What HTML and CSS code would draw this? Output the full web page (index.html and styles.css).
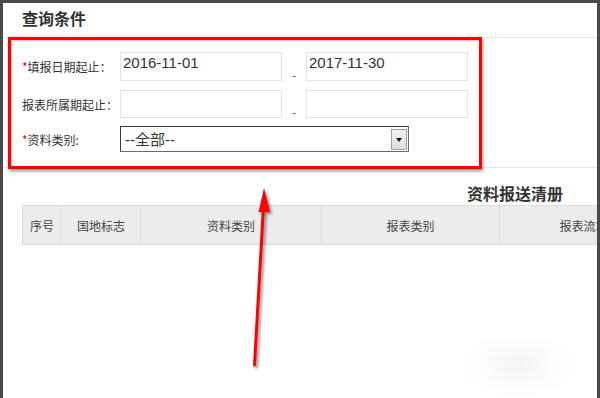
FILE: index.html
```html
<!DOCTYPE html>
<html lang="zh-CN">
<head>
    <meta charset="UTF-8">
    <meta name="viewport" content="width=device-width, initial-scale=1.0">
    <title>查询条件</title>
    <link rel="stylesheet" href="styles.css">
</head>
<body>
    <div class="frame">
        <div class="head">
            <h2>查询条件</h2>
        </div>

        <form class="query">
            <label class="label"><span class="star">*</span>填报日期起止：</label>
            <input class="field" type="text" value="2016-11-01">
            <span class="dash">-</span>
            <input class="field" type="text" value="2017-11-30">

            <label class="label">报表所属期起止：</label>
            <input class="field" type="text" value="">
            <span class="dash">-</span>
            <input class="field" type="text" value="">

            <label class="label"><span class="star">*</span>资料类别:</label>
            <div class="select-box">
                <select class="select">
                    <option>--全部--</option>
                </select>
                <span class="drop"></span>
            </div>
        </form>

        <div class="list">
            <h3 class="list-title">资料报送清册</h3>
            <table class="grid">
                <colgroup>
                    <col style="width: 39px">
                    <col style="width: 79px">
                    <col style="width: 181px">
                    <col style="width: 178px">
                    <col style="width: 180px">
                </colgroup>
                <tr>
                    <th>序号</th>
                    <th>国地标志</th>
                    <th>资料类别</th>
                    <th>报表类别</th>
                    <th>报表流水号</th>
                </tr>
            </table>
        </div>

        <!-- annotation drawn over the screenshot -->
        <div class="mark-box"></div>
        <svg class="mark-arrow" width="600" height="398" viewBox="0 0 600 398">
            <line x1="254.5" y1="365" x2="263.5" y2="206" stroke="#f00" stroke-width="3" stroke-linecap="round"/>
            <polygon points="264,188 258.5,212 270,212" fill="#f00"/>
        </svg>
    </div>
</body>
</html>
```

FILE: styles.css
```css
body {
    margin: 0;
    font-family: "Noto Sans CJK SC", "Liberation Sans", sans-serif;
    color: #333;
}

.frame {
    position: relative;
    width: 600px;
    height: 398px;
    box-sizing: border-box;
    border-top: 3px solid #4a4a4a;
    border-left: 3px solid #4a4a4a;
    border-right: 3px solid #4a4a4a;
    background: radial-gradient(ellipse 62px 34px at 515px 362px, #f5f5f5, #fcfcfc 60%, #fff 100%);
    overflow: hidden;
}

.head {
    height: 34px;
    padding-left: 19px;
    border-bottom: 1px solid #e8e8e8;
}

h2 {
    margin: 0;
    font-size: 16px;
    line-height: 30px;
    font-weight: bold;
    color: #333;
}

.query {
    display: grid;
    grid-template-columns: 98px 162px 24px 162px;
    grid-template-rows: 29px 28px 25px;
    row-gap: 9px;
    padding: 14px 0 15px 19px;
    border-bottom: 1px solid #e8e8e8;
}

.label {
    align-self: center;
    font-size: 12px;
    color: #333;
    white-space: nowrap;
}

.star {
    color: #e00;
}

.field {
    box-sizing: border-box;
    height: 100%;
    margin: 0;
    padding: 0 0 8px 2px;
    border: 1px solid #e2e2e2;
    font-family: "Liberation Sans", sans-serif;
    font-size: 15px;
    color: #333;
    outline: none;
}

.dash {
    align-self: end;
    padding-left: 10px;
    font-size: 12px;
    line-height: 12px;
    color: #555;
}

.select-box {
    grid-column: 2 / 5;
    width: 289px;
    box-sizing: border-box;
    display: flex;
    align-items: center;
    margin-top: -1px;
    border: 1px solid #6a6a6a;
    border-top-color: #3d3d3d;
    border-left-color: #3d3d3d;
    background: #fff;
}

.select {
    flex: 1;
    height: 100%;
    padding-left: 4px;
    border: none;
    appearance: none;
    background: transparent;
    font-family: "Liberation Sans", "Noto Sans CJK SC", sans-serif;
    font-size: 15px;
    color: #333;
    outline: none;
}

.drop {
    position: relative;
    width: 16px;
    height: 21px;
    margin-right: 1px;
    box-sizing: border-box;
    border: 1px solid #a0a0a0;
    background: linear-gradient(#f2f2f2, #dcdcdc);
}

.drop::after {
    content: "";
    position: absolute;
    left: 4px;
    top: 8px;
    border-left: 3px solid transparent;
    border-right: 3px solid transparent;
    border-top: 4px solid #111;
}

.list-title {
    margin: 0;
    padding: 14px 0 0 464px;
    height: 23px;
    font-size: 16px;
    line-height: 22px;
    font-weight: bold;
    color: #333;
    white-space: nowrap;
}

.grid {
    margin-left: 19px;
    width: 657px;
    table-layout: fixed;
    border-collapse: collapse;
}

.grid th {
    height: 38px;
    padding: 0;
    border: 1px solid #dcdcdc;
    background: #ececec;
    font-size: 12px;
    font-weight: normal;
    color: #444;
    white-space: nowrap;
    overflow: hidden;
}

.mark-box {
    position: absolute;
    left: 5px;
    top: 34px;
    width: 468px;
    height: 126px;
    border: 3px solid #f00;
    box-shadow: 1px 2px 3px rgba(0, 0, 0, 0.45), inset 1px 1px 2px rgba(0, 0, 0, 0.25);
}

.mark-arrow {
    position: absolute;
    left: -3px;
    top: -3px;
    filter: drop-shadow(2px 2px 1.5px rgba(0, 0, 0, 0.45));
}
```
